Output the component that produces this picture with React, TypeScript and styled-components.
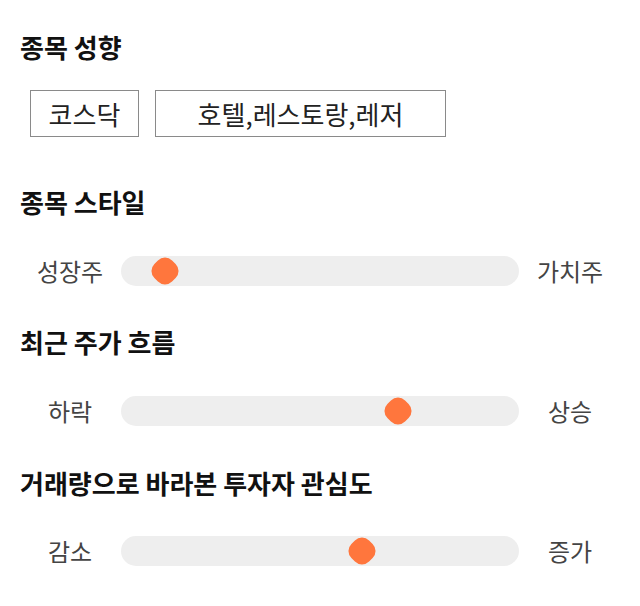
import React from "react";
import styled, { createGlobalStyle } from "styled-components";

const Global = createGlobalStyle`
  html, body { margin: 0; padding: 0; background: #fff; }
  body { font-family: "Noto Sans CJK KR", "Noto Sans", sans-serif; color: #111; }
`;

const Page = styled.div`
  width: 640px;
  padding: 32px 20px 0;
  box-sizing: border-box;
  display: flex;
  flex-direction: column;
`;

const Section = styled.section<{ $gap: number; $top: number }>`
  display: flex;
  flex-direction: column;
  gap: ${(p) => p.$gap}px;
  margin-top: ${(p) => p.$top}px;
`;

const Heading = styled.h2`
  margin: 0;
  font-size: 26px;
  font-weight: 700;
  line-height: 30px;
  color: #111;
`;

const Chips = styled.div`
  display: flex;
  gap: 16px;
  padding-left: 10px;
`;

const Chip = styled.div<{ $w: number }>`
  width: ${(p) => p.$w}px;
  height: 47px;
  box-sizing: border-box;
  border: 1px solid #8a8a8a;
  display: flex;
  align-items: center;
  justify-content: center;
  font-size: 26px;
  color: #222;
  line-height: 1;
`;

const SliderRow = styled.div`
  display: grid;
  grid-template-columns: 100px 1fr 100px;
  align-items: center;
  height: 30px;
`;

const Label = styled.span`
  text-align: center;
  font-size: 24px;
  color: #444;
  line-height: 30px;
`;

const Track = styled.div`
  position: relative;
  height: 30px;
  margin: 0 1px;
  background: #eeeeee;
  border-radius: 15px;
`;

const Thumb = styled.div`
  position: absolute;
  top: 50%;
  width: 25px;
  height: 25px;
  background: #ff763d;
  border-radius: 10px;
  transform: translate(-50%, -50%) rotate(45deg);
`;

type SliderProps = { left: string; right: string; value: number };

const Slider = ({ left, right, value }: SliderProps) => (
  <SliderRow>
    <Label>{left}</Label>
    <Track role="slider" aria-valuenow={value} aria-valuemin={0} aria-valuemax={100}>
      <Thumb style={{ left: `${value}%` }} />
    </Track>
    <Label>{right}</Label>
  </SliderRow>
);

export default function App() {
  return (
    <>
      <Global />
      <Page>
        <Section $gap={28} $top={0}>
          <Heading>종목 성향</Heading>
          <Chips>
            <Chip $w={109}>코스닥</Chip>
            <Chip $w={291}>호텔,레스토랑,레저</Chip>
          </Chips>
        </Section>
        <Section $gap={39} $top={50}>
          <Heading>종목 스타일</Heading>
          <Slider left="성장주" right="가치주" value={11.1} />
        </Section>
        <Section $gap={39} $top={41}>
          <Heading>최근 주가 흐름</Heading>
          <Slider left="하락" right="상승" value={69.7} />
        </Section>
        <Section $gap={38} $top={42}>
          <Heading>거래량으로 바라본 투자자 관심도</Heading>
          <Slider left="감소" right="증가" value={60.6} />
        </Section>
      </Page>
    </>
  );
}
